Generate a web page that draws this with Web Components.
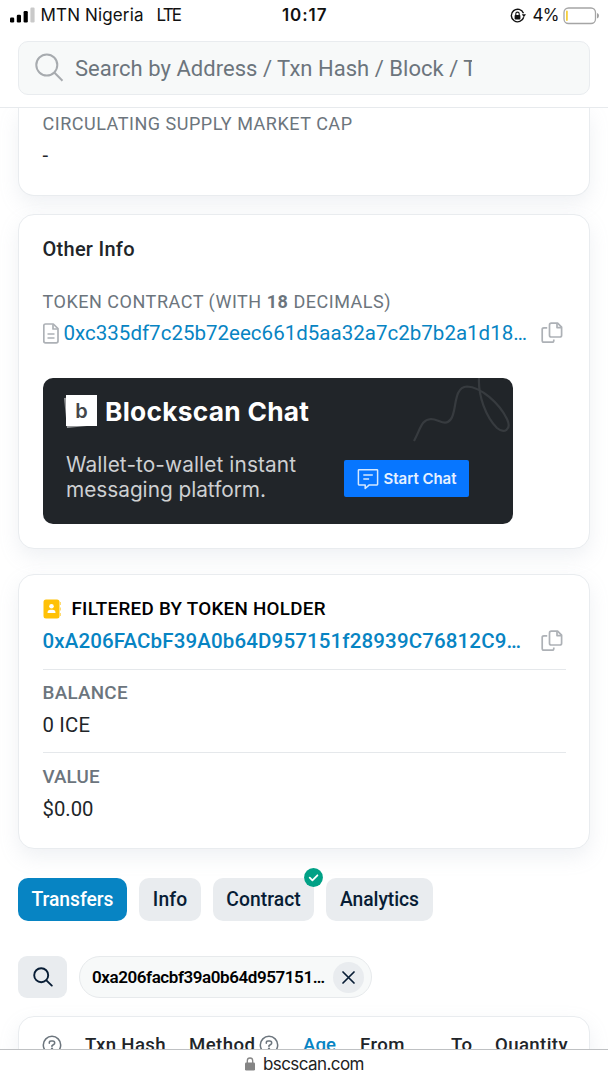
<!DOCTYPE html>
<html lang="en">
<head>
<meta charset="utf-8">
<title>BscScan token</title>
<style>
html,body{margin:0;height:100%;background:#fff}
body{font-family:Roboto,"Liberation Sans",sans-serif;color:#212529;overflow:hidden}
</style>
</head>
<body>
<token-page></token-page>
<script>
const define = (name, html) => customElements.define(name, class extends HTMLElement {
  constructor() { super(); this.attachShadow({ mode: 'open' }).innerHTML = html; }
});

define('copy-icon', `<style>:host{display:block;width:22px;height:22px}svg{display:block}</style>
<svg width="22" height="22" viewBox="0 0 22 22" fill="none" stroke="#adb1b6" stroke-width="1.7" stroke-linejoin="round">
<path d="M10.3 1.2h6.300l4 4v8q0 1.800-1.800 1.800h-8.500q-1.800 0-1.800-1.800V3q0-1.800 1.800-1.800z"/><path d="M16 1.500v4.100h4.200" />
<path d="M6.200 5.800H2.900Q1.200 5.800 1.200 7.500v10.900q0 1.700 1.700 1.700h8.200q1.700 0 1.700-1.700v-.9"/></svg>`);

define('help-icon', `<style>:host{display:block;width:20px;height:20px;position:relative}svg{display:block}</style>
<svg width="20" height="20" viewBox="0 0 20 20" fill="none" stroke="#6c757d" stroke-width="1.500"><circle cx="10" cy="10" r="8.700"/><path d="M7.300 8.200V7.700Q7.300 6 9.100 6h1.700q1.900 0 1.900 1.900 0 1-1 1.600L10 10.600v1.100" stroke-linecap="round"/><circle cx="10" cy="14" r=".5" fill="#6c757d"/></svg>`);

define('status-bar', `<style>
:host{display:flex;height:31px;align-items:center;font-family:Inter,"Liberation Sans",sans-serif;font-size:17px;color:#111;position:relative}
svg{display:block;flex:none}.sig{margin-left:10px}.a{margin-left:5.500px}.b{margin-left:13px}.c{margin-left:100px;font-weight:600}.lock{margin-left:183px}.d{margin-left:7px}.bat{margin-left:3.500px}
fit-line{margin-bottom:1px}
</style>
<svg class="sig" width="25" height="17" viewBox="0 0 25 17"><rect y="10.500" width="4.200" height="5" rx="1.200" fill="#000"/><rect x="6.800" y="7.800" width="4.200" height="7.700" rx="1.200" fill="#000"/><rect x="13.600" y="4" width="4.200" height="11.500" rx="1.200" fill="#000"/><rect x="20.400" y=".5" width="4.200" height="15" rx="1.200" fill="#c9c9c9"/></svg>
<fit-line class="a" w="103">MTN Nigeria</fit-line><fit-line class="b" w="25.500">LTE</fit-line><fit-line class="c" w="44.500">10:17</fit-line>
<svg class="lock" width="16" height="16" viewBox="0 0 16 16"><path d="M13.700 9.300A6.300 6.300 0 1 1 13.500 5.200" fill="none" stroke="#111" stroke-width="1.400"/><path d="M11.800 6.200h4.200l-2.100 3z" fill="#111"/><rect x="4.600" y="7" width="5.800" height="4.500" rx=".8" fill="#111"/><path d="M5.800 7.200V5.800a1.700 1.700 0 0 1 3.400 0v1.400" fill="none" stroke="#111" stroke-width="1.100"/></svg>
<fit-line class="d" w="27">4%</fit-line>
<svg class="bat" width="37" height="18" viewBox="0 0 37 18"><rect x="1" y="1" width="31.500" height="15.500" rx="4.500" fill="#fff" stroke="#a5a5a5" stroke-width="1.300"/><rect x="3" y="3.500" width="1.800" height="10.500" rx=".9" fill="#f5cf3c"/><path d="M34 6q2 .8 2 2.800t-2 2.800z" fill="#a0a0a0"/></svg>`);

define('search-header', `<style>
:host{display:block;height:77px;box-sizing:border-box;padding:10px 18px 0;border-bottom:1px solid #e7eaed;background:#fff}
.box{height:54px;box-sizing:border-box;border:1.500px solid #e9ecef;border-radius:10px;background:#f7f9f9;display:flex;align-items:center;font-size:22px;color:#6c757d}
svg{margin-left:16px;flex:none}.clip{width:397px;overflow:hidden;margin-left:11px;line-height:34px;padding-top:1px}
</style><div class="box"><svg width="29" height="30" viewBox="0 0 29 30" fill="none" stroke="#a7abaf" stroke-width="2"><circle cx="11.800" cy="12" r="10.500"/><path d="M19.300 19.500l8.200 8.200"/></svg>
<div class="clip"><fit-line w="401.500">Search by Address / Txn Hash / Block / T</fit-line></div></div>`);

define('info-card', `<style>
:host{display:block;box-sizing:border-box;margin:0 18px;padding:0 23.500px;border:1px solid #e9ecef;border-radius:16px;background:#fff;box-shadow:0 8px 20px rgba(150,163,182,.15)}
</style><slot></slot>`);

define('chat-banner', `<style>
:host{display:flex;box-sizing:border-box;width:470px;height:146px;border-radius:10px;background:#212529;position:relative;overflow:hidden;font-family:Inter,"Liberation Sans",sans-serif}
.l{width:301px;padding-left:20px;box-sizing:border-box}.t{display:flex;align-items:center;height:32px;margin-top:17px;font-size:26.300px;font-weight:700;color:#fff;gap:8.500px}
.p{margin:25px 0 0 3.500px;font-size:20.800px;line-height:25px;color:#ced0d2}
.logo{width:34px;height:34px;position:relative;flex:none}.logo svg{display:block}.logo b{position:absolute;inset:0 0 0 4px;font-size:20px;line-height:34px;text-align:center;font-weight:600;color:#44474a}
.btn{margin-top:82px;width:125px;height:37px;border-radius:2px;background:#0776ff;display:flex;align-items:center;color:#e5f0ff;font-weight:600;font-size:15px;gap:5px}
.btn svg{margin-left:13px}.sq{position:absolute;right:0;top:0}
</style>
<svg class="sq" width="110" height="70" viewBox="0 0 110 70" fill="none" stroke="#373b3f" stroke-width="2.200"><path d="M11 63C18 50 18 42 28 41C36 41 42 49 48 41C54 33 50 9 64 8.500C78 9 96 25 104 41C109 52 101 56 94 50C83 39 75 18 76 0"/></svg>
<div class="l"><div class="t"><span class="logo"><svg width="34" height="34"><path d="M1 4L34 1L34 31L4 34z" fill="#96989a"/><path d="M3 1h31v31h-31z" fill="#fff"/></svg><b>b</b></span><fit-line w="204">Blockscan Chat</fit-line></div>
<div class="p"><fit-line w="230">Wallet-to-wallet instant</fit-line><fit-line w="200">messaging platform.</fit-line></div></div>
<div class="btn"><svg width="22" height="22" viewBox="0 0 22 22" fill="none" stroke="#d5e8ff" stroke-width="1.500" stroke-linejoin="round"><path d="M2 1.700h18q.6 0 .6.600V16.300q0 .6-.6.600H12.300L8.200 20.500V16.900H2q-.6 0-.6-.6V2.300q0-.6.600-.6z"/><path d="M6.300 7h9.500M6.300 11h5.800"/></svg><fit-line w="73">Start Chat</fit-line></div>`);

define('tab-pill', `<style>
:host{display:flex;position:relative;height:43px;border-radius:10px;background:#e9ecef;color:#081d35;align-items:center;justify-content:center;font-size:19.300px;font-weight:500}
:host([active]){background:#0784c3;color:#fff}
slot[name=badge]{display:block;position:absolute;right:-9px;top:-10px;line-height:0}
</style><slot></slot><slot name="badge"></slot>`);

define('token-page', `<style>
:host{display:flex;flex-direction:column;height:1080px;width:608px;overflow:hidden;background:#fff}
main{flex:1;min-height:0;overflow:hidden}
.c1{height:88px;margin-top:0;border-top:0;border-radius:0 0 16px 16px;padding-top:4px}
.label{font-size:18px;line-height:24px;color:#6c757d}
.val{font-size:20.300px;line-height:26px}
.c2{height:335px;margin-top:18px}.c3{height:275px;margin-top:25px}
.title{font-size:20px;font-weight:500;line-height:26px;margin-top:21px}
.row{display:flex;align-items:center;height:28px;color:#0784c3;font-size:20.500px}
.row svg,.hd svg{flex:none;display:block}.row copy-icon{margin-left:auto;margin-right:3px}
.hd{display:flex;align-items:center;height:24px;margin-top:22px;color:#000;font-size:18.800px;font-weight:500}
hr{border:0;height:1px;background:#e5e8eb;margin:0}
.tabs{display:flex;gap:12px;padding:0 18px;margin-top:29px}
.filters{display:flex;gap:12px;padding:0 18px;margin-top:35px}
.sb{width:49px;height:42px;border-radius:9px;background:#e9ecef;display:flex;align-items:center;justify-content:center}
.pill{width:293px;height:42px;box-sizing:border-box;border:1.500px solid #e7eaec;border-radius:21px;background:#f7f9f9;display:flex;align-items:center;padding-left:12px;font-size:17px;font-weight:600;color:#000}
.x{width:31px;height:31px;border-radius:50%;background:#e9ecef;display:flex;align-items:center;justify-content:center;margin-left:8px}
.c4{height:90px;margin-top:18px}.th{display:flex;align-items:center;height:24px;margin-top:16px;font-size:18.600px;font-weight:500;color:#212529}
footer{height:30px;flex:none;border-top:1px solid #bfc1c3;background:#fff;display:flex;align-items:center;padding-left:245px;font-family:Inter,"Liberation Sans",sans-serif;font-size:17px;color:#222;gap:8px}
footer svg,footer fit-line{margin-bottom:2px}
</style>
<status-bar></status-bar><search-header></search-header>
<main>
<info-card class="c1"><div class="label"><fit-line w="309.500">CIRCULATING SUPPLY MARKET CAP</fit-line></div><div class="val" style="margin-top:6px">-</div></info-card>
<info-card class="c2">
 <div class="title"><fit-line w="92">Other Info</fit-line></div>
 <div class="label" style="margin-top:28px"><fit-line w="348">TOKEN CONTRACT (WITH <b>18</b> DECIMALS)</fit-line></div>
 <div class="row" style="margin-top:5px"><svg width="16" height="21" viewBox="0 0 16 21" fill="none" stroke="#adb1b6" stroke-width="1.700" stroke-linejoin="round"><path d="M2.500 1h7.800L15 5.700V18q0 1.800-1.800 1.800H2.500Q.8 19.800.8 18V2.800Q.8 1 2.500 1z"/><path d="M10 1.300v4.700h4.700M4.500 11h7M4.500 15h7"/></svg><fit-line style="margin-left:5px" w="463.500">0xc335df7c25b72eec661d5aa32a7c2b7b2a1d18…</fit-line><copy-icon></copy-icon></div>
 <chat-banner style="margin-top:31px"></chat-banner>
</info-card>
<info-card class="c3">
 <div class="hd"><svg width="18" height="20" viewBox="0 0 18 20"><rect x=".5" y=".5" width="16" height="19" rx="2.500" fill="#ffc107"/><path d="M17.300 3v3M17.300 8.500v3M17.300 14v3" stroke="#ffdc73" stroke-width="1.400"/><circle cx="8.500" cy="7.300" r="2.300" fill="#fff"/><path d="M4.500 14q0-3.300 3-3.300h2q3 0 3 3.300z" fill="#fff"/></svg><fit-line style="margin-left:11px" w="254">FILTERED BY TOKEN HOLDER</fit-line></div>
 <div class="row" style="margin-top:6px;font-weight:500"><fit-line w="478.500">0xA206FACbF39A0b64D957151f28939C76812C9…</fit-line><copy-icon></copy-icon></div>
 <hr style="margin-top:14px">
 <div class="label" style="margin-top:11px;font-weight:500;font-size:18.800px"><fit-line w="85">BALANCE</fit-line></div><div class="val" style="margin-top:7px"><fit-line w="47.500">0 ICE</fit-line></div>
 <hr style="margin-top:14px">
 <div class="label" style="margin-top:12px;font-weight:500;font-size:18.800px"><fit-line w="57">VALUE</fit-line></div><div class="val" style="margin-top:7px"><fit-line w="51">$0.00</fit-line></div>
</info-card>
<div class="tabs"><tab-pill active style="width:109px"><fit-line w="82">Transfers</fit-line></tab-pill><tab-pill style="width:62px"><fit-line w="34.500">Info</fit-line></tab-pill><tab-pill style="width:101px"><fit-line w="74.500">Contract</fit-line><svg slot="badge" width="19" height="19" viewBox="0 0 19 19"><circle cx="9.500" cy="9.500" r="9.400" fill="#00a186"/><path d="M5.700 9.700l2.700 2.600 5-5" fill="none" stroke="#fff" stroke-width="1.800" stroke-linecap="round" stroke-linejoin="round"/></svg></tab-pill><tab-pill style="width:107px"><fit-line w="79">Analytics</fit-line></tab-pill></div>
<div class="filters"><div class="sb"><svg width="20" height="20" viewBox="0 0 20 20" fill="none" stroke="#081d35" stroke-width="1.900" stroke-linecap="round"><circle cx="8.200" cy="8.200" r="7"/><path d="M13.400 13.400l5.400 5.200"/></svg></div>
<div class="pill"><fit-line w="233">0xa206facbf39a0b64d957151…</fit-line><span class="x"><svg width="13" height="13" viewBox="0 0 13 13" stroke="#081d35" stroke-width="1.700" stroke-linecap="round"><path d="M1 1l11 11M12 1L1 12"/></svg></span></div></div>
<info-card class="c4"><div class="th"><help-icon style="margin-left:-.5px"></help-icon><fit-line style="margin-left:23px" w="80.500">Txn Hash</fit-line><fit-line style="margin-left:23.500px" w="66">Method</fit-line><help-icon style="margin-left:4px"></help-icon><fit-line style="margin-left:24px;color:#0784c3" w="33">Age</fit-line><fit-line style="margin-left:24px" w="44.500">From</fit-line><fit-line style="margin-left:46.500px" w="21">To</fit-line><fit-line style="margin-left:23px" w="72.500">Quantity</fit-line></div></info-card>
</main>
<footer><svg width="10" height="14" viewBox="0 0 10 14"><rect y="5.500" width="10" height="8" rx="1.300" fill="#858585"/><path d="M2.300 6V3.700a2.700 2.700 0 0 1 5.400 0V6" fill="none" stroke="#858585" stroke-width="1.300"/></svg><fit-line w="101.500">bscscan.com</fit-line></footer>`);

// Tracks its text out (or in) so that the line measures exactly w pixels.
customElements.define('fit-line', class extends HTMLElement {
  constructor() {
    super();
    this.attachShadow({ mode: 'open' }).innerHTML = `<style>:host{display:block;white-space:nowrap;flex:none}span{display:inline-block}</style><span><slot></slot></span>`;
  }
  connectedCallback() {
    const w = +this.getAttribute('w'), s = this.shadowRoot.querySelector('span');
    const ls = (w - s.getBoundingClientRect().width) / (this.textContent.length - 1);
    s.style.letterSpacing = ls + 'px';
    this.style.width = w + 'px';
  }
});
</script>
</body>
</html>
